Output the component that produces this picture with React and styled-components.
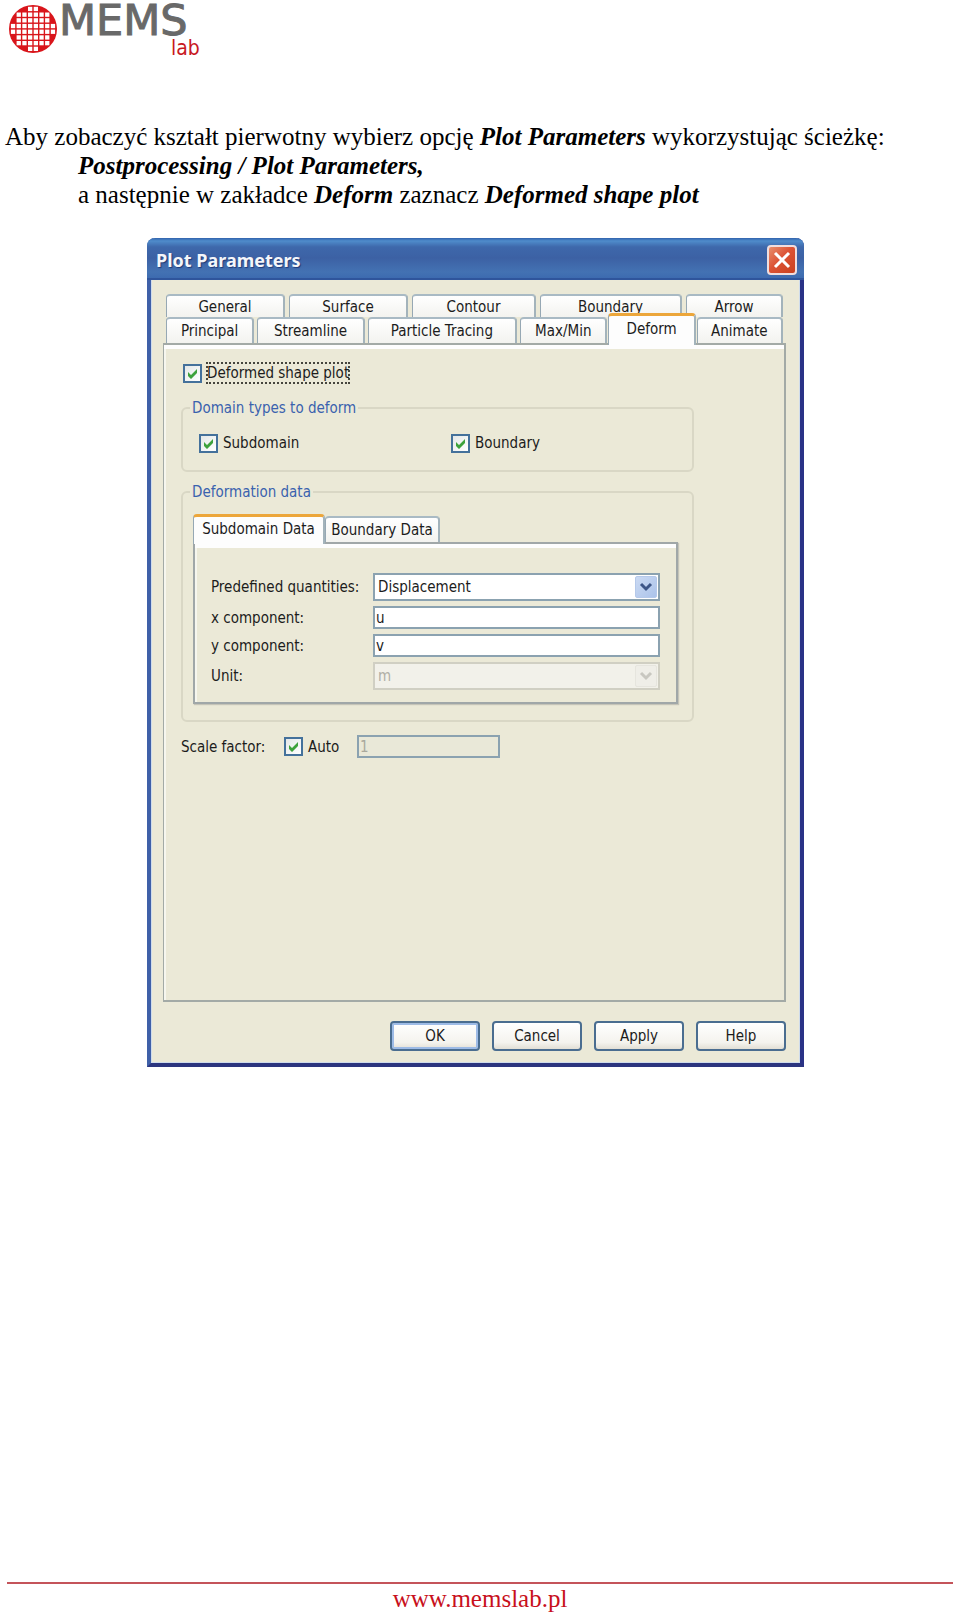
import React from "react";
import styled, { createGlobalStyle, css } from "styled-components";

const GlobalStyle = createGlobalStyle`
  *, *::before, *::after { box-sizing: border-box; }
  body { margin: 0; background: #fff; }
`;

const ui = css`
  font-family: "DejaVu Sans Condensed", "Noto Sans", sans-serif;
  font-size: 15px;
  line-height: 20px;
  color: #1c1c1c;
`;

const Page = styled.div`
  min-height: 100vh;
  display: flex;
  flex-direction: column;
  font-family: "Liberation Serif", "Times New Roman", serif;
  font-size: 25px;
  line-height: 29px;
  color: #000;
`;

const Header = styled.header`
  padding: 0 8px;
  height: 122px;
`;

const LogoDrawing = styled.svg`
  display: block;
  overflow: visible;
`;

const Content = styled.main`
  padding: 0 14px 0 5px;
`;

const Instructions = styled.p`
  margin: 0 0 29px;
  padding-left: 73px;
  text-indent: -73px;
`;

const Term = styled.strong`
  font-style: italic;
`;

const Footer = styled.footer`
  margin: auto 7px 0;
  border-top: 2px solid #c4545a;
  text-align: center;
`;

const SiteLink = styled.a`
  color: #c8101c;
  text-decoration: none;
`;

const Dialog = styled.section`
  ${ui}
  width: 657px;
  max-width: 100%;
  margin: 0 auto;
  border: 4px solid #3f60a8;
  border-top: 0;
  border-right-color: #2a3286;
  border-bottom-color: #2c357f;
  border-radius: 8px 8px 0 0;
  background: #ebe9d7;
`;

const TitleBar = styled.header`
  display: flex;
  align-items: center;
  justify-content: space-between;
  height: 42px;
  margin: 0 -4px;
  padding: 4px 7px 0 9px;
  border-radius: 8px 8px 0 0;
  border-bottom: 2px solid #2f559c;
  background: linear-gradient(#3163ad 0, #4f8ccb 3px, #3e68ab 9px, #3c61a4 20px, #4372b3 34px, #3d6bb0);
`;

const Title = styled.h1`
  margin: 0;
  font-family: "Noto Sans", sans-serif;
  font-size: 18px;
  line-height: 24px;
  font-weight: 700;
  color: #f4f6fa;
  text-shadow: 1px 1px 1px #1f3a78;
`;

const CloseButton = styled.button`
  display: grid;
  place-items: center;
  width: 30px;
  height: 30px;
  padding: 0;
  border: 2px solid #f0dede;
  border-radius: 4px;
  background: linear-gradient(135deg, #e8906f, #dc5335 45%, #c9401f);
`;

const DialogBody = styled.div`
  padding: 14px 13px 11px 11px;
  border: solid #cfdcec;
  border-width: 0 1px 1px;
`;

const TabRow = styled.div`
  display: grid;
  grid-template-columns: ${(p) => p.$columns};
  gap: ${(p) => p.$gap}px;
  padding: 0 3px;
`;

const Tab = styled.button`
  ${ui}
  height: ${(p) => p.$height}px;
  padding: 0 0 ${(p) => (p.$active ? 3 : 0)}px;
  border: 1px solid #96a8b4;
  border-width: 2px 2px 0 1px;
  border-color: #a9bac4 #a3b3bb #a9bac4 #96a8b4;
  border-radius: 4px 4px 0 0;
  background: linear-gradient(#fff, #f3f3ef);
  white-space: nowrap;
  ${(p) =>
    p.$active &&
    css`
      position: relative;
      z-index: 1;
      margin: ${p.$outset};
      border-top: 3px solid #eca63a;
      background: #fdfdfd;
    `}
`;

const MainPanel = styled.div`
  min-height: 659px;
  padding: 12px 90px 17px 17px;
  border: 2px solid #a3aaa6;
  border-left-width: 1px;
  box-shadow: inset 0 4px #fdfdfd, inset 2px 0 #f6f6ee;
`;

const CheckLabel = styled.label`
  display: inline-flex;
  align-items: center;
  gap: 5px;
`;

const CheckFrame = styled.span`
  position: relative;
  width: 19px;
  height: 19px;
`;

const CheckInput = styled.input`
  appearance: none;
  display: block;
  width: 19px;
  height: 19px;
  margin: 0;
  border: 2px solid #44719b;
  background: linear-gradient(135deg, #e4e8e8, #fff);
`;

const CheckMark = styled.svg`
  position: absolute;
  inset: 0;
  pointer-events: none;
`;

const FocusText = styled.span`
  outline: ${(p) => (p.$focused ? "2px dotted #45453d" : "none")};
  outline-offset: -1px;
`;

const FirstOption = styled.div`
  display: flex;
  align-items: flex-start;
  height: 41px;
  padding: 6px 0 0 2px;
`;

const Group = styled.fieldset`
  min-width: 0;
  margin: 0 0 ${(p) => p.$after}px;
  padding: ${(p) => p.$padding};
  border: 2px solid #d9d7c5;
  border-radius: 6px;
`;

const Legend = styled.legend`
  height: 20px;
  padding: 0 2px;
  color: #3a62ae;
`;

const DomainChecks = styled.div`
  display: grid;
  grid-template-columns: 14fr 13fr;
  padding-left: 9px;
`;

const DataArea = styled.div`
  padding-left: 3px;
`;

const DataTabs = styled(TabRow)`
  align-items: end;
  padding: 0;
`;

const DataPanel = styled.div`
  display: grid;
  grid-template-columns: 162px 1fr;
  align-items: center;
  row-gap: 5px;
  padding: 29px 16px 12px;
  border: 2px solid #a0a7a8;
  box-shadow: inset 0 4px #fdfdfd, inset 2px 0 #f6f6ee, 1px 1px 1px #c5c4b8;
`;

const TextInput = styled.input`
  ${ui}
  width: ${(p) => p.$width};
  min-width: 0;
  height: 23px;
  padding: 0 0 0 1px;
  border: 2px solid #8ba2b0;
  background: #fff;
  &:disabled {
    background: #e9e8d8;
    color: #aaa99d;
  }
`;

const SelectFrame = styled.div`
  position: relative;
`;

const Select = styled.select`
  ${ui}
  appearance: none;
  display: block;
  width: 100%;
  height: 28px;
  padding: 0 28px 0 3px;
  border: 2px solid #8ba2b0;
  border-radius: 0;
  background: #fff;
  &:disabled {
    border-color: #d0cfc3;
    background: #f2f1ea;
    color: #b0afa6;
    opacity: 1;
  }
`;

const SelectArrow = styled.span`
  position: absolute;
  top: 3px;
  right: 3px;
  display: grid;
  place-items: center;
  width: 22px;
  height: 22px;
  border: 1px solid ${(p) => (p.$disabled ? "#e6e5de" : "#b5c9ea")};
  border-radius: 2px;
  background: ${(p) => (p.$disabled ? "#efeee8" : "linear-gradient(135deg, #cbdaf3, #abc3ea)")};
  color: ${(p) => (p.$disabled ? "#c8c7c0" : "#3d5687")};
  pointer-events: none;
`;

const ScaleRow = styled.div`
  display: flex;
  align-items: center;
`;

const ScaleLabel = styled.span`
  width: 103px;
`;

const ScaleAuto = styled.div`
  display: flex;
  width: 73px;
`;

const Actions = styled.div`
  display: flex;
  justify-content: flex-end;
  gap: 12px;
  padding-top: 19px;
`;

const ActionButton = styled.button`
  ${ui}
  width: 90px;
  height: 30px;
  padding: 0;
  border: 2px solid #4a6d90;
  border-radius: 4px;
  background: linear-gradient(#fff, #f4f3ee 75%, #e2dfd5);
  box-shadow: ${(p) => (p.$primary ? "inset 0 0 0 2px #9dbbe6" : "none")};
`;

function Logo() {
  const counts = [2, 6, 6, 8, 8, 6, 6, 2];
  const pitch = 5.7;
  return (
    <LogoDrawing width="200" height="60" viewBox="8 0 200 60" role="img" aria-label="MEMS lab">
      <circle cx="33" cy="29" r="24" fill="#d9151b" />
      {counts.map((count, row) =>
        Array.from({ length: count }, (_, i) => (
          <rect
            key={`${row}-${i}`}
            x={33.7 + (i - count / 2) * pitch}
            y={29.6 + (row - 4) * pitch}
            width="4.3"
            height="4.3"
            fill="#fff"
          />
        ))
      )}
      <text x="59" y="35" fontFamily="DejaVu Sans, sans-serif" fontSize="43" fill="#696969" stroke="#696969">
        MEMS
      </text>
      <text x="171" y="55" fontFamily="DejaVu Sans Condensed, sans-serif" fontSize="21" fill="#c8191f">
        lab
      </text>
    </LogoDrawing>
  );
}

function Check({ label, focused }) {
  return (
    <CheckLabel>
      <CheckFrame>
        <CheckInput type="checkbox" defaultChecked />
        <CheckMark width="19" height="19" viewBox="0 0 19 19">
          <path d="M5 8v4l3 3 6-6V5L8 11Z" fill="#3da23c" />
        </CheckMark>
      </CheckFrame>
      <FocusText $focused={focused}>{label}</FocusText>
    </CheckLabel>
  );
}

function Dropdown({ id, value, disabled }) {
  return (
    <SelectFrame>
      <Select id={id} disabled={disabled} defaultValue={value}>
        <option>{value}</option>
      </Select>
      <SelectArrow $disabled={disabled}>
        <svg width="14" height="10" viewBox="0 0 14 10">
          <path d="M2 2l5 5 5-5" fill="none" stroke="currentColor" strokeWidth="3" />
        </svg>
      </SelectArrow>
    </SelectFrame>
  );
}

export default function App() {
  return (
    <Page>
      <GlobalStyle />
      <Header>
        <Logo />
      </Header>
      <Content>
        <Instructions>
          Aby zobaczyć kształt pierwotny wybierz opcję <Term>Plot Parameters</Term> wykorzystując ścieżkę:
          <br />
          <Term>Postprocessing / Plot Parameters,</Term>
          <br />a następnie w zakładce <Term>Deform</Term> zaznacz <Term>Deformed shape plot</Term>
        </Instructions>
        <Dialog aria-label="Plot Parameters">
          <TitleBar>
            <Title>Plot Parameters</Title>
            <CloseButton aria-label="Close">
              <svg width="18" height="18" viewBox="0 0 18 18">
                <path d="M2 2l14 14M16 2L2 16" stroke="#fff" strokeWidth="3" />
              </svg>
            </CloseButton>
          </TitleBar>
          <DialogBody>
            <TabRow $columns="119fr 119fr 124fr 142fr 97fr" $gap={4}>
              {["General", "Surface", "Contour", "Boundary", "Arrow"].map((name) => (
                <Tab key={name} $height={23}>
                  {name}
                </Tab>
              ))}
            </TabRow>
            <TabRow $columns="88fr 107fr 149fr 87fr 83fr 86fr" $gap={3}>
              {["Principal", "Streamline", "Particle Tracing", "Max/Min"].map((name) => (
                <Tab key={name} $height={26}>
                  {name}
                </Tab>
              ))}
              <Tab $active $height={32} $outset="-4px -2px -2px">
                Deform
              </Tab>
              <Tab $height={26}>Animate</Tab>
            </TabRow>
            <MainPanel>
              <FirstOption>
                <Check label="Deformed shape plot" focused />
              </FirstOption>
              <Group $after={10} $padding="15px 7px 17px">
                <Legend>Domain types to deform</Legend>
                <DomainChecks>
                  <Check label="Subdomain" />
                  <Check label="Boundary" />
                </DomainChecks>
              </Group>
              <Group $after={13} $padding="12px 14px 16px 7px">
                <Legend>Deformation data</Legend>
                <DataArea>
                  <DataTabs $columns="132px 115px" $gap={0}>
                    <Tab $active $height={30} $outset="0 0 -2px">
                      Subdomain Data
                    </Tab>
                    <Tab $height={26}>Boundary Data</Tab>
                  </DataTabs>
                  <DataPanel>
                    <label htmlFor="quantities">Predefined quantities:</label>
                    <Dropdown id="quantities" value="Displacement" />
                    <label htmlFor="x-component">x component:</label>
                    <TextInput id="x-component" $width="100%" defaultValue="u" />
                    <label htmlFor="y-component">y component:</label>
                    <TextInput id="y-component" $width="100%" defaultValue="v" />
                    <label htmlFor="unit">Unit:</label>
                    <Dropdown id="unit" value="m" disabled />
                  </DataPanel>
                </DataArea>
              </Group>
              <ScaleRow>
                <ScaleLabel>Scale factor:</ScaleLabel>
                <ScaleAuto>
                  <Check label="Auto" />
                </ScaleAuto>
                <TextInput $width="143px" aria-label="Scale factor" defaultValue="1" disabled />
              </ScaleRow>
            </MainPanel>
            <Actions>
              <ActionButton $primary>OK</ActionButton>
              <ActionButton>Cancel</ActionButton>
              <ActionButton>Apply</ActionButton>
              <ActionButton>Help</ActionButton>
            </Actions>
          </DialogBody>
        </Dialog>
      </Content>
      <Footer>
        <SiteLink href="#">www.memslab.pl</SiteLink>
      </Footer>
    </Page>
  );
}
